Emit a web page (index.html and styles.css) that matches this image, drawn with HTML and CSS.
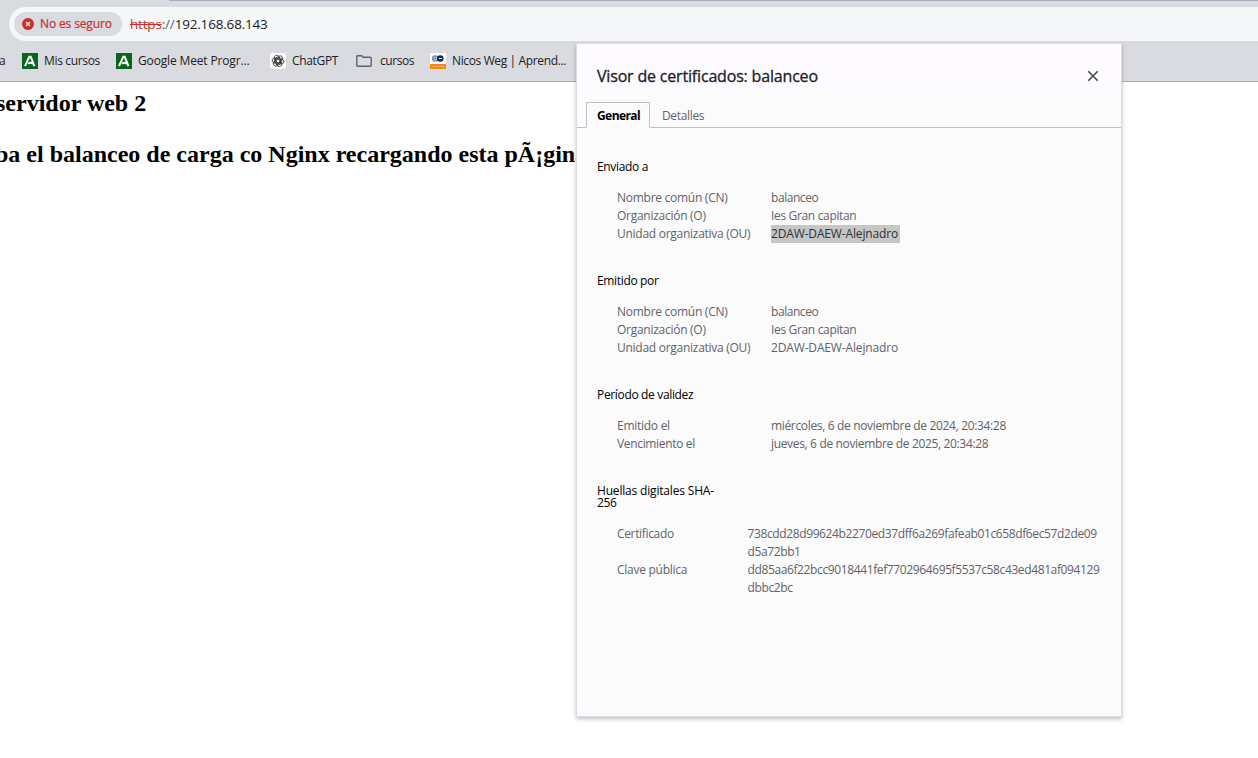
FILE: index.html
```
<!DOCTYPE html>
<html lang="es">
<head>
<meta charset="utf-8">
<title>192.168.68.143</title>
<link rel="stylesheet" href="styles.css">
</head>
<body>
<header class="chrome">
  <div class="tabstrip"><i class="tabstrip-line"></i></div>
  <div class="omnibox">
    <div class="chip">
      <svg width="12" height="12" viewBox="0 0 12 12"><circle cx="6" cy="6" r="6" fill="#c9302a"/><path d="M4 4l4 4M8 4l-4 4" stroke="#e9dfe3" stroke-width="1.5"/></svg>
      <span>No es seguro</span>
    </div>
    <div class="url"><s>https</s><em>://</em>192.168.68.143</div>
  </div>
  <nav class="bookmarks">
    <span class="bm bm-cut">a</span>
    <span class="bm bm-mis"><svg width="16" height="16" viewBox="0 0 16 16"><path fill="#08651f" d="M0 0h16v16H0z"/><path d="M3 13.2L7.3 3.800h1.400L12.400 13.200M6.200 10.800c2-1.600 4-1 4.800.4" fill="none" stroke="#fff" stroke-width="2"/></svg><span>Mis cursos</span></span>
    <span class="bm bm-meet"><svg width="16" height="16" viewBox="0 0 16 16"><path fill="#08651f" d="M0 0h16v16H0z"/><path d="M3 13.2L7.3 3.800h1.400L12.400 13.200M6.200 10.800c2-1.600 4-1 4.800.4" fill="none" stroke="#fff" stroke-width="2"/></svg><span>Google Meet Progr...</span></span>
    <span class="bm bm-gpt"><svg width="16" height="16" viewBox="0 0 16 16"><rect width="16" height="16" rx="3" fill="#fff"/><g fill="none" stroke="#333" stroke-width=".8"><path id="petal" d="M4.200 5.100a2.600 2.600 0 0 1 4.900-1.400M4.300 4.900v4l3.600 2.100M6.300 9.100V5.900l3.300-1.900"/><use href="#petal" transform="rotate(60 8 8)"/><use href="#petal" transform="rotate(120 8 8)"/><use href="#petal" transform="rotate(180 8 8)"/><use href="#petal" transform="rotate(240 8 8)"/><use href="#petal" transform="rotate(300 8 8)"/></g></svg><span>ChatGPT</span></span>
    <span class="bm bm-dir"><svg width="16" height="16" viewBox="0 0 16 16"><path d="M.8 3.700q0-1 1-1h3.900l1.600 1.600h6.900q1 0 1 1v7q0 1-1 1H1.800q-1 0-1-1z" fill="none" stroke="#5f6368" stroke-width="1.400"/></svg><span>cursos</span></span>
    <span class="bm bm-nicos"><svg width="16" height="16" viewBox="0 0 16 16"><path fill="#fff" d="M0 0h16v11H0z"/><path fill="#ee8a1d" d="M0 11h16v5H0z"/><path d="M2 13.500h12" stroke="#f8b468" stroke-width="1" stroke-dasharray="2 .5"/><circle cx="5.300" cy="5.500" r="3.300" fill="#6d87a3"/><circle cx="5.300" cy="5.500" r="1.500" fill="none" stroke="#dce5ee" stroke-width=".8"/><circle cx="10.300" cy="5.500" r="3.300" fill="#0b2c58"/><path d="M9 5.500h3" stroke="#fff"/></svg><span>Nicos Weg | Aprend...</span></span>
  </nav>
</header>
<main class="page">
  <h2 class="h-a">servidor web 2</h2>
  <h2 class="h-b">ba el balanceo de carga co Nginx recargando esta pÃ¡gina</h2>
</main>
<section class="dialog">
  <div class="title-row"><h1>Visor de certificados: balanceo</h1>
    <svg width="12" height="12" viewBox="0 0 12 12"><path d="M1.300 1.300l9.400 9.400M10.700 1.300L1.300 10.700" stroke="#45454d" stroke-width="1.600"/></svg></div>
  <div class="tabs"><div class="tab active">General</div><div class="tab">Detalles</div></div>
  <div class="groups">
  <div class="group"><h3>Enviado a</h3>
    <dl><dt class="label">Nombre común (CN)</dt><dd class="short">balanceo</dd>
    <dt class="label">Organización (O)</dt><dd>Ies Gran capitan</dd>
    <dt class="label">Unidad organizativa (OU)</dt><dd class="unit"><span class="selected">2DAW-DAEW-Alejnadro</span></dd></dl></div>
  <div class="group"><h3>Emitido por</h3>
    <dl><dt class="label">Nombre común (CN)</dt><dd class="short">balanceo</dd>
    <dt class="label">Organización (O)</dt><dd>Ies Gran capitan</dd>
    <dt class="label">Unidad organizativa (OU)</dt><dd class="unit">2DAW-DAEW-Alejnadro</dd></dl></div>
  <div class="group"><h3>Período de validez</h3>
    <dl><dt class="label">Emitido el</dt><dd>miércoles, 6 de noviembre de 2024, 20:34:28</dd>
    <dt>Vencimiento el</dt><dd>jueves, 6 de noviembre de 2025, 20:34:28</dd></dl></div>
  <div class="group"><h3><span class="sha">Huellas digitales SHA-</span><br>256</h3>
    <dl class="prints"><dt>Certificado</dt><dd>738cdd28d99624b2270ed37dff6a269fafeab01c658df6ec57d2de09<br>d5a72bb1</dd>
    <dt class="label">Clave pública</dt><dd>dd85aa6f22bcc9018441fef7702964695f5537c58c43ed481af094129<br>dbbc2bc</dd></dl></div>
  </div>
</section>
</body>
</html>
```
FILE: styles.css
```
* { box-sizing: border-box; }
body { margin: 0; width: 1258px; height: 758px; overflow: hidden; position: relative; background: #fff; font: 12px/18px "Open Sans", "Noto Sans", sans-serif; letter-spacing: -.34px; color: #202124; }
h1, h2, h3, dl, dd { margin: 0; }
.chrome { height: 82px; background: #d9dbe0; border-bottom: 1px solid #a9abb0; }
.tabstrip { height: 7px; }
.tabstrip-line { display: block; height: 1px; margin-left: 169px; background: #abaebd; }
.omnibox { height: 34px; margin-left: 9px; padding-left: 5px; border-radius: 17px 0 0 17px; background: #f5f7f9; display: flex; align-items: center; }
.chip { height: 24px; width: 108px; padding-left: 8px; border-radius: 12px; background: #d9dbe0; color: #c9302a; font-weight: 500; letter-spacing: -.13px; -webkit-text-stroke: .2px #c9302a; display: flex; align-items: center; gap: 6px; white-space: nowrap; }
.url { margin-left: 8px; font-size: 13.5px; letter-spacing: -.18px; white-space: nowrap; }
.url s { color: #c9302a; }
.url em { font-style: normal; color: #5f6368; }
.bookmarks { height: 40px; display: flex; align-items: center; white-space: nowrap; }
.bm { display: flex; align-items: center; gap: 6px; flex: none; }
.bm-cut { width: 23px; margin-left: -1px; }
.bm-mis { width: 94px; }
.bm-meet { width: 154px; letter-spacing: -.15px; }
.bm-gpt { width: 86px; }
.bm-dir { width: 74px; gap: 8px; letter-spacing: -.42px; }
.bm-nicos { letter-spacing: -.37px; }
.page { padding-top: 8px; font-family: "Liberation Serif", serif; letter-spacing: 0; color: #000; }
.page h2 { font-size: 24px; line-height: 27px; white-space: nowrap; margin-bottom: 24px; }
.h-a { margin-left: -4px; }
.h-b { margin-left: -5px; }
.dialog { position: absolute; left: 576px; top: 43px; width: 546px; height: 674px; background: #fbfbfc; border: 1px solid #dcdde8; box-shadow: 0 2px 4px rgba(0,0,0,.25); color: #5f6368; }
.title-row { height: 58px; padding: 5px 22px 0 20px; display: flex; align-items: center; justify-content: space-between; background: linear-gradient(#fdfbff 45px, #fbfbfc 45px); }
.title-row h1 { padding-top: 1px; }
h1 { font-size: 16px; font-weight: 500; letter-spacing: -.18px; -webkit-text-stroke: .3px #202124; color: #202124; }
.tabs { height: 26px; display: flex; padding-left: 9px; border-bottom: 1px solid #c0c1c5; }
.tab { height: 26px; padding: 4px 11px; border: 1px solid transparent; white-space: nowrap; }
.tab.active { width: 64px; background: #fbfbfc; color: #000; font-weight: 700; letter-spacing: -.57px; border-color: #c0c1c5; border-bottom-color: #fbfbfc; padding: 4px 10px; }
.groups { padding: 33px 20px 0; display: flex; flex-direction: column; gap: 32px; }
.group { display: flex; flex-direction: column; gap: 16px; }
h3 { font-size: 12px; font-weight: 400; color: #000; line-height: 12px; }
.sha { letter-spacing: -.18px; }
dl { display: grid; grid-template-columns: 154px 1fr; padding-left: 20px; white-space: nowrap; }
.prints { grid-template-columns: 130.5px 1fr; }
.prints dd { letter-spacing: -.38px; }
.label { letter-spacing: -.27px; }
.short { letter-spacing: -.44px; }
.unit { letter-spacing: -.15px; }
.selected { display: inline-block; width: 129px; background: #c6c6c6; color: #303134; }
```
